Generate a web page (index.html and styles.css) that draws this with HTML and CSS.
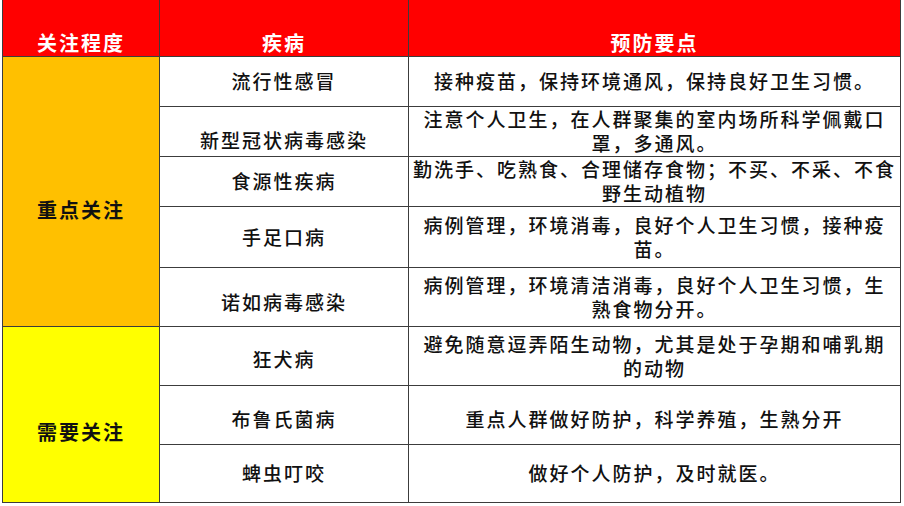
FILE: index.html
```html
<!DOCTYPE html>
<html lang="zh-CN">
<head>
<meta charset="utf-8">
<title>关注程度</title>
<link rel="stylesheet" href="styles.css">
</head>
<body>
<table class="grid">
  <colgroup>
    <col class="col-level">
    <col class="col-disease">
    <col class="col-tips">
  </colgroup>
  <thead>
    <tr class="row-head">
      <th>关注程度</th>
      <th>疾病</th>
      <th>预防要点</th>
    </tr>
  </thead>
  <tbody>
    <tr class="row-50">
      <td class="level level-key" rowspan="5">重点关注</td>
      <td class="disease">流行性感冒</td>
      <td class="tips">接种疫苗，保持环境通风，保持良好卫生习惯。</td>
    </tr>
    <tr class="row-50">
      <td class="disease top-22">新型冠状病毒感染</td>
      <td class="tips">注意个人卫生，在人群聚集的室内场所科学佩戴口<br>罩，多通风。</td>
    </tr>
    <tr class="row-50">
      <td class="disease">食源性疾病</td>
      <td class="tips">勤洗手、吃熟食、合理储存食物；不买、不采、不食<br>野生动植物</td>
    </tr>
    <tr class="row-61">
      <td class="disease">手足口病</td>
      <td class="tips">病例管理，环境消毒，良好个人卫生习惯，接种疫<br>苗。</td>
    </tr>
    <tr class="row-59">
      <td class="disease top-23">诺如病毒感染</td>
      <td class="tips">病例管理，环境清洁消毒，良好个人卫生习惯，生<br>熟食物分开。</td>
    </tr>
    <tr class="row-59">
      <td class="level level-watch" rowspan="3">需要关注</td>
      <td class="disease top-21">狂犬病</td>
      <td class="tips">避免随意逗弄陌生动物，尤其是处于孕期和哺乳期<br>的动物</td>
    </tr>
    <tr class="row-59">
      <td class="disease top-22">布鲁氏菌病</td>
      <td class="tips top-22">重点人群做好防护，科学养殖，生熟分开</td>
    </tr>
    <tr class="row-58">
      <td class="disease">蜱虫叮咬</td>
      <td class="tips">做好个人防护，及时就医。</td>
    </tr>
  </tbody>
</table>
</body>
</html>
```

FILE: styles.css
```css
html, body {
  margin: 0;
  padding: 0;
  background: #ffffff;
}

body {
  font-family: "Noto Sans CJK SC", "Noto Sans", sans-serif;
  color: #111111;
}

.grid {
  margin-left: 2px;
  width: 898px;
  table-layout: fixed;
  border-collapse: collapse;
}

.col-level { width: 157px; }
.col-disease { width: 249px; }
.col-tips { width: 492px; }

.grid th,
.grid td {
  border: 1px solid #3c3c3c;
  padding: 0 2px;
  text-align: center;
  box-sizing: border-box;
}

.grid thead th {
  border-top: none;
  background: #ff0000;
  color: #ffffff;
  font-size: 20px;
  font-weight: 700;
  letter-spacing: 2px;
  line-height: 24px;
  vertical-align: bottom;
  padding-bottom: 1px;
}

.row-head { height: 56px; }
.row-50 { height: 50px; }
.row-61 { height: 61px; }
.row-59 { height: 59px; }
.row-58 { height: 58px; }

.grid td.level {
  font-size: 20px;
  font-weight: 700;
  letter-spacing: 2px;
  line-height: 24px;
  color: #111111;
  vertical-align: top;
}

.grid td.level-key {
  background: #ffc000;
  padding-top: 141px;
}

.grid td.level-watch {
  background: #ffff00;
  padding-top: 93px;
}

.grid td.disease,
.grid td.tips {
  font-size: 19px;
  font-weight: 500;
  letter-spacing: 2px;
  line-height: 24px;
  vertical-align: middle;
}

.grid td.tips {
  padding: 0 1px;
}

.grid td.top-21,
.grid td.top-22,
.grid td.top-23 {
  vertical-align: top;
}

.grid td.top-21 { padding-top: 20px; }
.grid td.top-22 { padding-top: 21px; }
.grid td.top-23 { padding-top: 22px; }
```
